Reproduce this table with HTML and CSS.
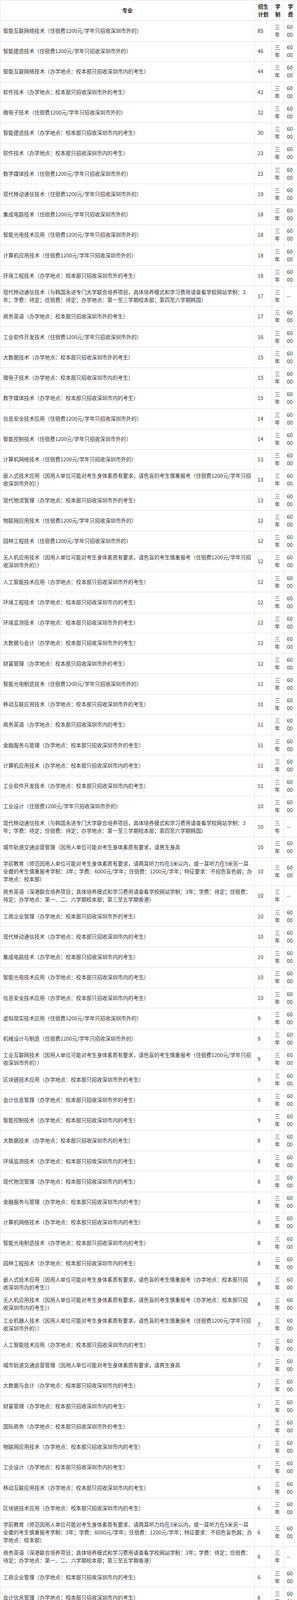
FILE: index.html
```html
<!DOCTYPE html>
<html lang="zh-CN">
<head>
<meta charset="utf-8">
<meta name="viewport" content="width=device-width, initial-scale=1">
<title>招生计划</title>
<link rel="stylesheet" href="styles.css">
</head>
<body>
<table class="plan-table">
<colgroup>
<col class="c-major">
<col class="c-plan">
<col class="c-years">
<col class="c-fee">
</colgroup>
<thead>
<tr><th class="major-h">专业</th><th>招生计划</th><th>学制</th><th>学费</th></tr>
</thead>
<tbody>
<tr><td class="major">智能互联网络技术（住宿费1200元/学年只招收深圳市外的）</td><td>85</td><td>三年</td><td class="fee">6000</td></tr>
<tr><td class="major">智能建造技术（住宿费1200元/学年只招收深圳市外的）</td><td>46</td><td>三年</td><td class="fee">6000</td></tr>
<tr><td class="major">智能互联网络技术（办学地点：校本部只招收深圳市内的考生）</td><td>44</td><td>三年</td><td class="fee">6000</td></tr>
<tr><td class="major">软件技术（办学地点：校本部只招收深圳市外的考生）</td><td>42</td><td>三年</td><td class="fee">6000</td></tr>
<tr><td class="major">微电子技术（住宿费1200元/学年只招收深圳市外的）</td><td>32</td><td>三年</td><td class="fee">6000</td></tr>
<tr><td class="major">智能建造技术（办学地点：校本部只招收深圳市内的考生）</td><td>30</td><td>三年</td><td class="fee">6000</td></tr>
<tr><td class="major">软件技术（办学地点：校本部只招收深圳市内的考生）</td><td>23</td><td>三年</td><td class="fee">6000</td></tr>
<tr><td class="major">数字媒体技术（住宿费1200元/学年只招收深圳市外的）</td><td>22</td><td>三年</td><td class="fee">6000</td></tr>
<tr><td class="major">现代移动通信技术（住宿费1200元/学年只招收深圳市外的）</td><td>19</td><td>三年</td><td class="fee">6000</td></tr>
<tr><td class="major">集成电路技术（住宿费1200元/学年只招收深圳市外的）</td><td>18</td><td>三年</td><td class="fee">6000</td></tr>
<tr><td class="major">智能光电技术应用（住宿费1200元/学年只招收深圳市外的）</td><td>18</td><td>三年</td><td class="fee">6000</td></tr>
<tr><td class="major">计算机应用技术（住宿费1200元/学年只招收深圳市外的）</td><td>18</td><td>三年</td><td class="fee">6000</td></tr>
<tr><td class="major">环境工程技术（办学地点：校本部只招收深圳市外的考生）</td><td>18</td><td>三年</td><td class="fee">6000</td></tr>
<tr><td class="major">现代移动通信技术（与韩国永进专门大学联合培养项目，具体培养模式和学习费用请查看学校网站学制：3<br>年；学费：待定；住宿费：待定；办学地点：第一至三学期校本部；第四至六学期韩国）</td><td>17</td><td>三年</td><td class="fee">--</td></tr>
<tr><td class="major">商务英语（办学地点：校本部只招收深圳市外的考生）</td><td>17</td><td>三年</td><td class="fee">6000</td></tr>
<tr><td class="major">工业软件开发技术（住宿费1200元/学年只招收深圳市外的）</td><td>16</td><td>三年</td><td class="fee">6000</td></tr>
<tr><td class="major">大数据技术（办学地点：校本部只招收深圳市外的考生）</td><td>15</td><td>三年</td><td class="fee">6000</td></tr>
<tr><td class="major">微电子技术（办学地点：校本部只招收深圳市内的考生）</td><td>15</td><td>三年</td><td class="fee">6000</td></tr>
<tr><td class="major">数字媒体技术（办学地点：校本部只招收深圳市内的考生）</td><td>15</td><td>三年</td><td class="fee">6000</td></tr>
<tr><td class="major">信息安全技术应用（住宿费1200元/学年只招收深圳市外的）</td><td>14</td><td>三年</td><td class="fee">6000</td></tr>
<tr><td class="major">智能控制技术（住宿费1200元/学年只招收深圳市外的）</td><td>14</td><td>三年</td><td class="fee">6000</td></tr>
<tr><td class="major">计算机网络技术（住宿费1200元/学年只招收深圳市外的）</td><td>13</td><td>三年</td><td class="fee">6000</td></tr>
<tr><td class="major">嵌入式技术应用（因用人单位可能对考生身体素质有要求，请色盲的考生慎重报考（住宿费1200元/学年只招<br>收深圳市外的））</td><td>13</td><td>三年</td><td class="fee">6000</td></tr>
<tr><td class="major">现代物流管理（办学地点：校本部只招收深圳市外的考生）</td><td>13</td><td>三年</td><td class="fee">6000</td></tr>
<tr><td class="major">物联网应用技术（住宿费1200元/学年只招收深圳市外的）</td><td>12</td><td>三年</td><td class="fee">6000</td></tr>
<tr><td class="major">园林工程技术（住宿费1200元/学年只招收深圳市外的）</td><td>12</td><td>三年</td><td class="fee">6000</td></tr>
<tr><td class="major">无人机应用技术（因用人单位可能对考生身体素质有要求，请色盲的考生慎重报考（住宿费1200元/学年只招<br>收深圳市外的））</td><td>12</td><td>三年</td><td class="fee">6000</td></tr>
<tr><td class="major">人工智能技术应用（办学地点：校本部只招收深圳市外的考生）</td><td>12</td><td>三年</td><td class="fee">6000</td></tr>
<tr><td class="major">环境工程技术（办学地点：校本部只招收深圳市内的考生）</td><td>12</td><td>三年</td><td class="fee">6000</td></tr>
<tr><td class="major">环境监测技术（办学地点：校本部只招收深圳市外的考生）</td><td>12</td><td>三年</td><td class="fee">6000</td></tr>
<tr><td class="major">大数据与会计（办学地点：校本部只招收深圳市外的考生）</td><td>12</td><td>三年</td><td class="fee">6000</td></tr>
<tr><td class="major">财富管理（办学地点：校本部只招收深圳市外的考生）</td><td>12</td><td>三年</td><td class="fee">6000</td></tr>
<tr><td class="major">智能光电制造技术（住宿费1200元/学年只招收深圳市外的）</td><td>11</td><td>三年</td><td class="fee">6000</td></tr>
<tr><td class="major">移动互联应用技术（办学地点：校本部只招收深圳市外的考生）</td><td>11</td><td>三年</td><td class="fee">6000</td></tr>
<tr><td class="major">商务英语（办学地点：校本部只招收深圳市内的考生）</td><td>11</td><td>三年</td><td class="fee">6000</td></tr>
<tr><td class="major">金融服务与管理（办学地点：校本部只招收深圳市外的考生）</td><td>11</td><td>三年</td><td class="fee">6000</td></tr>
<tr><td class="major">计算机应用技术（办学地点：校本部只招收深圳市内的考生）</td><td>11</td><td>三年</td><td class="fee">6000</td></tr>
<tr><td class="major">工业软件开发技术（办学地点：校本部只招收深圳市内的考生）</td><td>11</td><td>三年</td><td class="fee">6000</td></tr>
<tr><td class="major">工业设计（住宿费1200元/学年只招收深圳市外的）</td><td>10</td><td>三年</td><td class="fee">6000</td></tr>
<tr><td class="major">现代移动通信技术（与韩国永进专门大学联合培养项目，具体培养模式和学习费用请查看学校网站学制：3<br>年；学费：待定；住宿费：待定；办学地点：第一至三学期校本部；第四至六学期韩国）</td><td>10</td><td>三年</td><td class="fee">--</td></tr>
<tr><td class="major">城市轨道交通运营管理（因用人单位可能对考生身体素质有要求，请男生身高</td><td>10</td><td>三年</td><td class="fee">6000</td></tr>
<tr><td class="major">学前教育（师范因用人单位可能对考生身体素质有要求，请两耳听力均在3米以内，或一耳听力在5米另一耳<br>全聋的考生慎重报考学制：3年；学费：6000元/学年；住宿费：1200元/学年；特征要求：不招色盲色弱；办<br>学地点：校本部）</td><td>10</td><td>三年</td><td class="fee">6000</td></tr>
<tr><td class="major">商务英语（深港联合培养项目；具体培养模式和学习费用请查看学校网站学制：3年；学费：待定；住宿费：<br>待定；办学地点：第一、二、六学期校本部；第三至五学期香港）</td><td>10</td><td>三年</td><td class="fee">--</td></tr>
<tr><td class="major">工商企业管理（办学地点：校本部只招收深圳市外的考生）</td><td>10</td><td>三年</td><td class="fee">6000</td></tr>
<tr><td class="major">现代移动通信技术（办学地点：校本部只招收深圳市内的考生）</td><td>10</td><td>三年</td><td class="fee">6000</td></tr>
<tr><td class="major">集成电路技术（办学地点：校本部只招收深圳市内的考生）</td><td>10</td><td>三年</td><td class="fee">6000</td></tr>
<tr><td class="major">智能光电技术应用（办学地点：校本部只招收深圳市内的考生）</td><td>10</td><td>三年</td><td class="fee">6000</td></tr>
<tr><td class="major">信息安全技术应用（办学地点：校本部只招收深圳市内的考生）</td><td>10</td><td>三年</td><td class="fee">6000</td></tr>
<tr><td class="major">虚拟现实技术应用（住宿费1200元/学年只招收深圳市外的）</td><td>9</td><td>三年</td><td class="fee">6000</td></tr>
<tr><td class="major">机械设计与制造（住宿费1200元/学年只招收深圳市外的）</td><td>9</td><td>三年</td><td class="fee">6000</td></tr>
<tr><td class="major">工业互联网技术（因用人单位可能对考生身体素质有要求，请色盲的考生慎重报考（住宿费1200元/学年只招<br>收深圳市外的））</td><td>9</td><td>三年</td><td class="fee">6000</td></tr>
<tr><td class="major">区块链技术应用（办学地点：校本部只招收深圳市外的考生）</td><td>9</td><td>三年</td><td class="fee">6000</td></tr>
<tr><td class="major">会计信息管理（办学地点：校本部只招收深圳市外的考生）</td><td>9</td><td>三年</td><td class="fee">6000</td></tr>
<tr><td class="major">智能控制技术（办学地点：校本部只招收深圳市内的考生）</td><td>9</td><td>三年</td><td class="fee">6000</td></tr>
<tr><td class="major">大数据技术（办学地点：校本部只招收深圳市内的考生）</td><td>8</td><td>三年</td><td class="fee">6000</td></tr>
<tr><td class="major">环境监测技术（办学地点：校本部只招收深圳市内的考生）</td><td>8</td><td>三年</td><td class="fee">6000</td></tr>
<tr><td class="major">现代物流管理（办学地点：校本部只招收深圳市内的考生）</td><td>8</td><td>三年</td><td class="fee">6000</td></tr>
<tr><td class="major">金融服务与管理（办学地点：校本部只招收深圳市内的考生）</td><td>8</td><td>三年</td><td class="fee">6000</td></tr>
<tr><td class="major">计算机网络技术（办学地点：校本部只招收深圳市内的考生）</td><td>8</td><td>三年</td><td class="fee">6000</td></tr>
<tr><td class="major">智能光电制造技术（办学地点：校本部只招收深圳市内的考生）</td><td>8</td><td>三年</td><td class="fee">6000</td></tr>
<tr><td class="major">园林工程技术（办学地点：校本部只招收深圳市内的考生）</td><td>8</td><td>三年</td><td class="fee">6000</td></tr>
<tr><td class="major">嵌入式技术应用（因用人单位可能对考生身体素质有要求，请色盲的考生慎重报考（办学地点：校本部只招<br>收深圳市内的考生））</td><td>8</td><td>三年</td><td class="fee">6000</td></tr>
<tr><td class="major">无人机应用技术（因用人单位可能对考生身体素质有要求，请色盲的考生慎重报考（办学地点：校本部只招<br>收深圳市内的考生））</td><td>8</td><td>三年</td><td class="fee">6000</td></tr>
<tr><td class="major">工业机器人技术（因用人单位可能对考生身体素质有要求，请色盲的考生慎重报考（住宿费1200元/学年只招<br>收深圳市外的））</td><td>7</td><td>三年</td><td class="fee">6000</td></tr>
<tr><td class="major">人工智能技术应用（办学地点：校本部只招收深圳市内的考生）</td><td>7</td><td>三年</td><td class="fee">6000</td></tr>
<tr><td class="major">城市轨道交通运营管理（因用人单位可能对考生身体素质有要求，请男生身高</td><td>7</td><td>三年</td><td class="fee">6000</td></tr>
<tr><td class="major">大数据与会计（办学地点：校本部只招收深圳市内的考生）</td><td>7</td><td>三年</td><td class="fee">6000</td></tr>
<tr><td class="major">财富管理（办学地点：校本部只招收深圳市内的考生）</td><td>7</td><td>三年</td><td class="fee">6000</td></tr>
<tr><td class="major">国际商务（办学地点：校本部只招收深圳市外的考生）</td><td>7</td><td>三年</td><td class="fee">6000</td></tr>
<tr><td class="major">物联网应用技术（办学地点：校本部只招收深圳市内的考生）</td><td>7</td><td>三年</td><td class="fee">6000</td></tr>
<tr><td class="major">工业设计（办学地点：校本部只招收深圳市内的考生）</td><td>7</td><td>三年</td><td class="fee">6000</td></tr>
<tr><td class="major">移动互联应用技术（办学地点：校本部只招收深圳市内的考生）</td><td>6</td><td>三年</td><td class="fee">6000</td></tr>
<tr><td class="major">区块链技术应用（办学地点：校本部只招收深圳市内的考生）</td><td>6</td><td>三年</td><td class="fee">6000</td></tr>
<tr><td class="major">学前教育（师范因用人单位可能对考生身体素质有要求，请两耳听力均在3米以内，或一耳听力在5米另一耳<br>全聋的考生慎重报考学制：3年；学费：6000元/学年；住宿费：1200元/学年；特征要求：不招色盲色弱；办<br>学地点：校本部）</td><td>6</td><td>三年</td><td class="fee">6000</td></tr>
<tr><td class="major">商务英语（深港联合培养项目；具体培养模式和学习费用请查看学校网站学制：3年；学费：待定；住宿费：<br>待定；办学地点：第一、二、六学期校本部；第三至五学期香港）</td><td>6</td><td>三年</td><td class="fee">--</td></tr>
<tr><td class="major">工商企业管理（办学地点：校本部只招收深圳市内的考生）</td><td>6</td><td>三年</td><td class="fee">6000</td></tr>
<tr><td class="major">会计信息管理（办学地点：校本部只招收深圳市内的考生）</td><td>6</td><td>三年</td><td class="fee">6000</td></tr>
<tr><td class="major">关务与外贸服务（办学地点：校本部只招收深圳市外的考生）</td><td>6</td><td>三年</td><td class="fee">6000</td></tr>
<tr><td class="major">文化产业经营与管理（办学地点：校本部只招收深圳市外的考生）</td><td>6</td><td>三年</td><td class="fee">6000</td></tr>
<tr><td class="major">虚拟现实技术应用（办学地点：校本部只招收深圳市内的考生）</td><td>6</td><td>三年</td><td class="fee">6000</td></tr>
<tr><td class="major">机械设计与制造（办学地点：校本部只招收深圳市内的考生）</td><td>6</td><td>三年</td><td class="fee">6000</td></tr>
<tr><td class="major">工业互联网技术（因用人单位可能对考生身体素质有要求，请色盲的考生慎重报考（办学地点：校本部只招<br>收深圳市内的考生））</td><td>6</td><td>三年</td><td class="fee">6000</td></tr>
<tr><td class="major">智能产品开发与应用（住宿费1200元/学年只招收深圳市外的）</td><td>5</td><td>三年</td><td class="fee">6000</td></tr>
<tr><td class="major">关务与外贸服务（办学地点：校本部只招收深圳市内的考生）</td><td>4</td><td>三年</td><td class="fee">6000</td></tr>
<tr><td class="major">国际商务（办学地点：校本部只招收深圳市内的考生）</td><td>4</td><td>三年</td><td class="fee">6000</td></tr>
<tr><td class="major">工业机器人技术（因用人单位可能对考生身体素质有要求，请色盲的考生慎重报考（办学地点：校本部只招<br>收深圳市内的考生））</td><td>4</td><td>三年</td><td class="fee">6000</td></tr>
<tr><td class="major">体育艺术表演（学制：3年；学费：6000元/学年；住宿费：1200元/学年；办学地点：校本部）</td><td>3</td><td>三年</td><td class="fee">6000</td></tr>
<tr><td class="major">文化产业经营与管理（办学地点：校本部只招收深圳市内的考生）</td><td>3</td><td>三年</td><td class="fee">6000</td></tr>
<tr><td class="major">智能产品开发与应用（办学地点：校本部只招收深圳市内的考生）</td><td>3</td><td>三年</td><td class="fee">6000</td></tr>
<tr><td class="major">体育艺术表演（学制：3年；学费：6000元/学年；住宿费：1200元/学年；办学地点：校本部）</td><td>2</td><td>三年</td><td class="fee">6000</td></tr>
<tr><td class="major">电子商务（办学地点：校本部只招收深圳市内的考生）</td><td>2</td><td>三年</td><td class="fee">6000</td></tr>
<tr><td class="major">电子商务（办学地点：校本部只招收深圳市外的考生）</td><td>2</td><td>三年</td><td class="fee">6000</td></tr>
<tr><td class="major">汽车智能技术（住宿费1200元/学年只招收深圳市外的）</td><td>1</td><td>三年</td><td class="fee">6000</td></tr>
<tr><td class="major">云计算技术应用（住宿费1200元/学年只招收深圳市外的）</td><td>1</td><td>三年</td><td class="fee">6000</td></tr>
<tr><td class="major">现代文秘（办学地点：校本部只招收深圳市内的考生）</td><td>1</td><td>三年</td><td class="fee">6000</td></tr>
<tr><td class="major">现代文秘（办学地点：校本部只招收深圳市外的考生）</td><td>1</td><td>三年</td><td class="fee">6000</td></tr>
<tr><td class="major">汽车智能技术（办学地点：校本部只招收深圳市内的考生）</td><td>1</td><td>三年</td><td class="fee">6000</td></tr>
<tr><td class="major">云计算技术应用（办学地点：校本部只招收深圳市内的考生）</td><td>1</td><td>三年</td><td class="fee">6000</td></tr>
</tbody>
</table>
</body>
</html>
```

FILE: styles.css
```css
html {
  -webkit-text-size-adjust: none;
  text-size-adjust: none;
}

html, body {
  margin: 0;
  padding: 0;
  background: #ffffff;
}

html, body, table, thead, tbody, tr, th, td {
  max-height: 1000000px;
}

body {
  font-family: "Noto Sans CJK SC", sans-serif;
  font-size: 13.33px;
  line-height: 20px;
  color: #333333;
}

.plan-table {
  width: 760px;
  table-layout: fixed;
  border-collapse: collapse;
}

.c-major { width: 651px; }
.c-plan { width: 44px; }
.c-years { width: 31px; }
.c-fee { width: 34px; }

.plan-table th,
.plan-table td {
  border: 1px solid #dddddd;
  padding: 5.625px 6px 5.625px 7px;
  vertical-align: middle;
  text-align: left;
  word-break: break-all;
}

.plan-table th {
  font-weight: bold;
  color: #222222;
  text-align: center;
  padding-left: 6px;
  padding-right: 6px;
}

.plan-table td.major {
  padding-right: 2px;
  white-space: nowrap;
  word-break: normal;
}

.plan-table td.fee {
  word-break: break-all;
}
```
